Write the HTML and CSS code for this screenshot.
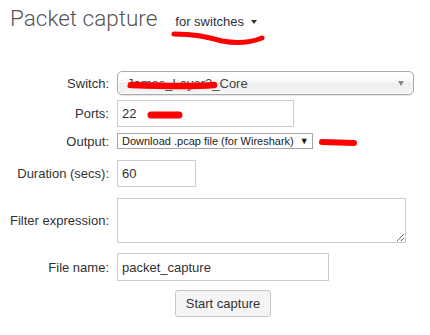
FILE: index.html
```html
<!DOCTYPE html>
<html>
<head>
<meta charset="utf-8">
<link rel="stylesheet" href="styles.css">
</head>
<body>
<div class="page">
  <header class="head">
    <h1 class="title">Packet capture</h1>
    <span class="scope">for switches <span class="caret"></span></span>
  </header>
  <form class="form">
    <div class="row row-switch">
      <label class="lbl">Switch:</label>
      <div class="chosen"><span class="chosen-val">James_Layer2_Core</span><span class="chosen-arrow"></span></div>
    </div>
    <div class="row row-ports">
      <label class="lbl">Ports:</label>
      <input class="inp inp-ports" type="text" value="22">
    </div>
    <div class="row row-output">
      <label class="lbl">Output:</label>
      <div class="native"><span class="native-val">Download .pcap file (for Wireshark)</span><span class="native-arrow">▼</span></div>
    </div>
    <div class="row row-duration">
      <label class="lbl">Duration (secs):</label>
      <input class="inp inp-duration" type="text" value="60">
    </div>
    <div class="row row-filter">
      <label class="lbl">Filter expression:</label>
      <textarea class="inp area"></textarea>
    </div>
    <div class="row row-file">
      <label class="lbl">File name:</label>
      <input class="inp inp-file" type="text" value="packet_capture">
    </div>
    <div class="actions">
      <button class="btn" type="button">Start capture</button>
    </div>
  </form>
  <svg class="redact" width="430" height="335" viewBox="0 0 430 335">
    <g fill="none" stroke="#ff0000" stroke-linecap="round">
      <path d="M174,34 C195,34 206,37 222,41 C238,44 252,42 262,38" stroke-width="5"/>
      <path d="M131,85 C160,86 190,87 214,85" stroke-width="6.5"/>
      <path d="M151,115 L179,115" stroke-width="7"/>
      <path d="M322,142 L354,143" stroke-width="6"/>
    </g>
  </svg>
</div>
</body>
</html>
```

FILE: styles.css
```css
* { box-sizing: border-box; }
html, body { margin: 0; padding: 0; background: #fff; }
body { font-family: "Liberation Sans", Arial, sans-serif; color: #333; font-size: 13px; }

.page { position: relative; width: 430px; height: 335px; overflow: hidden; }

.head { display: flex; align-items: baseline; padding: 4px 0 0 10px; height: 71px; }
.title { margin: 0; font-family: Roboto, "Liberation Sans", sans-serif; font-weight: 300; font-size: 22.5px; color: #555; line-height: 28px; }
.scope { margin-left: 18px; font-size: 13px; color: #2d2f3e; }
.caret { display: inline-block; width: 0; height: 0; margin-left: 3px; vertical-align: 2px;
  border-left: 3.5px solid transparent; border-right: 3.5px solid transparent; border-top: 4px solid #333; }

.form { display: flex; flex-direction: column; }
.row { display: flex; align-items: center; }
.lbl { width: 110px; text-align: right; padding-right: 1px; margin-right: 7px; font-size: 13px; color: #333; flex: none; }

.chosen { display: flex; align-items: center; width: 297px; height: 24px; padding: 0 0 0 9px;
  border: 1px solid #aaa; border-radius: 5px; color: #444;
  background: linear-gradient(#fff 20%, #f6f6f6 50%, #eee 52%, #f4f4f4 100%);
  box-shadow: 0 0 3px #fff inset, 0 1px 1px rgba(0,0,0,.1); }
.chosen-val { flex: 1; font-size: 13px; }
.chosen-arrow { width: 0; height: 0; margin-right: 9px; border-left: 3.5px solid transparent; border-right: 3.5px solid transparent; border-top: 5px solid #888; }

.row-ports { margin-top: 5px; }
.inp { font-family: "Liberation Sans", Arial, sans-serif; font-size: 13px; color: #333; border: 1px solid #ccc; padding: 0 4px; background: #fff; outline: none; margin: 0; }
.inp-ports { width: 177px; height: 27px; }

.row-output { margin-top: 6px; }
.native { display: flex; align-items: center; height: 16px; border: 1px solid #a6a6a6; padding: 0 3px 0 4px; background: #fff; color: #222; }
.native-val { font-size: 11px; }
.native-arrow { font-size: 9px; margin-left: 6px; color: #111; }

.row-duration { margin-top: 11px; }
.inp-duration { width: 79px; height: 27px; }

.row-filter { margin-top: 11px; }
.area { width: 289px; height: 45px; resize: both; display: block; padding: 4px; }

.row-file { margin-top: 10px; }
.inp-file { width: 212px; height: 28px; }

.actions { margin: 9px 0 0 175px; }
.btn { font-family: "Liberation Sans", Arial, sans-serif; font-size: 13px; color: #333; width: 96px; height: 27px; padding: 0;
  background: #f5f5f5; border: 1px solid #c6c6c6; border-radius: 3px; }

.redact { position: absolute; left: 0; top: 0; pointer-events: none; }
```
